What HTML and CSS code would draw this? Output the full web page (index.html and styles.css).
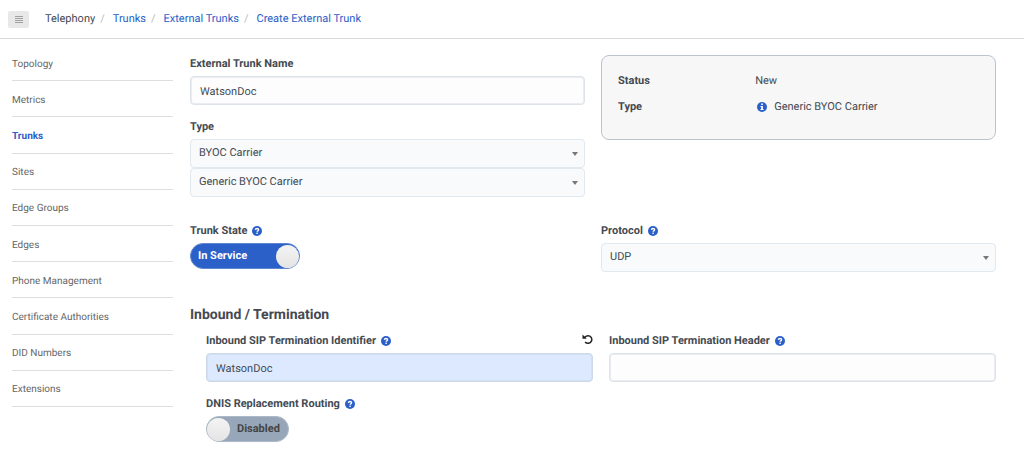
FILE: index.html
```html
<!DOCTYPE html>
<html lang="en">
<head>
<meta charset="utf-8">
<meta name="viewport" content="width=device-width, initial-scale=1">
<title>Create External Trunk</title>
<link rel="stylesheet" href="styles.css">
</head>
<body>
<svg class="sprite" width="0" height="0" aria-hidden="true">
  <symbol id="help" viewBox="0 0 10 10">
    <circle cx="5" cy="5" r="5" fill="#2a60c8"/>
    <path d="M3.4 3.9C3.5 2.9 4.1 2.5 5 2.5s1.6.5 1.6 1.3c0 1-1.5 1-1.5 2" fill="none" stroke="#fff" stroke-width="1.4"/>
    <rect x="4.4" y="6.6" width="1.4" height="1.4" fill="#fff"/>
  </symbol>
  <symbol id="info" viewBox="0 0 10 10">
    <circle cx="5" cy="5" r="5" fill="#2a60c8"/>
    <path d="M4.2 1.6h1.7v1.5H4.2zM3.5 3.9h2.4v3h.7v1.2H3.5V6.9h.7V5.1h-.7z" fill="#fff"/>
  </symbol>
</svg>
<header class="topbar">
  <button class="menu" type="button" aria-label="Toggle menu">
    <svg width="9" height="7" viewBox="0 0 9 7"><path d="M1 .5h8M1 2.5h8M1 4.5h8M1 6.5h8" stroke="#a0a0a0" stroke-width="1"/></svg>
  </button>
  <nav aria-label="Breadcrumb">
    <ol class="crumbs">
      <li>Telephony</li>
      <li><a href="#">Trunks</a></li>
      <li><a href="#">External Trunks</a></li>
      <li><a href="#">Create External Trunk</a></li>
    </ol>
  </nav>
</header>
<div class="page">
  <nav class="sidebar" aria-label="Telephony">
    <a href="#">Topology</a>
    <a href="#">Metrics</a>
    <a href="#" class="active" aria-current="page">Trunks</a>
    <a href="#">Sites</a>
    <a href="#">Edge Groups</a>
    <a href="#">Edges</a>
    <a href="#">Phone Management</a>
    <a href="#">Certificate Authorities</a>
    <a href="#">DID Numbers</a>
    <a href="#">Extensions</a>
  </nav>
  <main>
    <form class="form">
      <div class="columns">
        <div class="stack">
          <div class="field">
            <div class="caption"><label for="name">External Trunk Name</label></div>
            <input class="text" id="name" type="text" value="WatsonDoc">
          </div>
          <div class="field">
            <div class="caption"><label for="type">Type</label></div>
            <div class="selects">
              <div class="picker"><select id="type"><option>BYOC Carrier</option></select></div>
              <div class="picker"><select aria-label="Carrier"><option>Generic BYOC Carrier</option></select></div>
            </div>
          </div>
        </div>
        <dl class="summary">
          <dt>Status</dt><dd>New</dd>
          <dt>Type</dt><dd class="with-icon"><svg class="icon"><use href="#info"/></svg>Generic BYOC Carrier</dd>
        </dl>
      </div>
      <div class="columns state">
        <div class="field">
          <div class="caption"><label for="state">Trunk State</label><svg class="icon"><use href="#help"/></svg></div>
          <label class="toggle on">In Service<input id="state" type="checkbox" checked></label>
        </div>
        <div class="field">
          <div class="caption"><label for="protocol">Protocol</label><svg class="icon"><use href="#help"/></svg></div>
          <div class="picker"><select id="protocol"><option>UDP</option></select></div>
        </div>
      </div>
      <section>
        <h2>Inbound / Termination</h2>
        <div class="columns nested">
          <div class="field">
            <div class="caption">
              <label for="sip-id">Inbound SIP Termination Identifier</label><svg class="icon"><use href="#help"/></svg>
              <button class="reset" type="button" aria-label="Reset">
                <svg width="11" height="11" viewBox="0 0 11 11"><path d="M1.5 3.2H3C4 2 4.900 1.700 6 1.700a3.800 3.800 0 1 1-2.900 6.300" fill="none" stroke="#222" stroke-width="1.500"/><path d="M.5 .5v4.200h4.200z" fill="#222"/></svg>
              </button>
            </div>
            <input class="text filled" id="sip-id" type="text" value="WatsonDoc">
          </div>
          <div class="field">
            <div class="caption"><label for="sip-header">Inbound SIP Termination Header</label><svg class="icon"><use href="#help"/></svg></div>
            <input class="text" id="sip-header" type="text">
          </div>
          <div class="field">
            <div class="caption"><label for="dnis">DNIS Replacement Routing</label><svg class="icon"><use href="#help"/></svg></div>
            <label class="toggle off"><input id="dnis" type="checkbox">Disabled</label>
          </div>
        </div>
      </section>
    </form>
  </main>
</div>
</body>
</html>
```
FILE: styles.css
```css
* { box-sizing: border-box; }
body {
  margin: 0;
  background: #fff;
  color: #444a52;
  font: 11px/16px Roboto, "Liberation Sans", sans-serif;
  text-rendering: geometricPrecision;
}
a { color: #2a60c8; text-decoration: none; }
.sprite { display: block; }
.topbar {
  display: flex;
  align-items: center;
  gap: 16px;
  height: 39px;
  padding: 0 8px;
  border-bottom: 1px solid #d8dbdd;
}
.menu {
  display: grid;
  place-items: center;
  width: 21px;
  height: 17px;
  padding: 0;
  border: 0;
  border-radius: 2px;
  background: #e8e8e8;
}
.crumbs {
  display: flex;
  margin: 0;
  padding: 0;
  list-style: none;
}
.crumbs li + li::before {
  content: "/";
  margin: 0 8px 0 5px;
  color: #b8bcc0;
}
.page {
  display: grid;
  grid-template-columns: 161px 1fr;
  gap: 17px;
  padding: 0 28px 0 12px;
}
.sidebar {
  display: grid;
  grid-auto-rows: 1fr;
  padding: 6px 0 46px;
  font-size: 10px;
}
.sidebar a {
  display: flex;
  align-items: center;
  padding-top: 4px;
  border-bottom: 1px solid #dcdedf;
  color: #666;
}
.sidebar .active { color: #2a60c8; font-weight: 700; }
.form { padding: 17px 0 11px; }
.columns {
  display: grid;
  grid-template-columns: 1fr 1fr;
  gap: 14px 16px;
  align-items: start;
}
.stack { display: grid; gap: 14px; }
.field { display: grid; gap: 4px; justify-items: start; }
.caption {
  display: flex;
  align-items: center;
  gap: 5px;
  width: 100%;
  height: 16px;
  font-weight: 700;
}
.icon { width: 10px; height: 10px; }
.text, select {
  width: 100%;
  height: 29px;
  border: 1px solid #dde3e9;
  border-radius: 4px;
  color: inherit;
  font: inherit;
  text-rendering: inherit;
}
.text {
  padding: 1px 9px 0;
  background: #fdfdfd;
  box-shadow: inset 0 0 0 1px #e9edf1;
}
.filled { background: #dde9fe; border-color: #cdd9e8; box-shadow: inset 0 0 0 1px #d3e0f4; }
.selects, .picker { width: 100%; }
.picker { position: relative; }
.picker::after {
  content: "";
  position: absolute;
  top: 13px;
  right: 7px;
  border: 4px solid transparent;
  border-width: 4px 3px 0;
  border-top-color: #777;
  pointer-events: none;
}
select {
  display: block;
  appearance: none;
  padding: 0 20px 1px 8px;
  background: #f8fafc;
  border-color: #e1e8ee;
}
.summary {
  display: grid;
  grid-template-columns: 38% 1fr;
  gap: 10px 0;
  margin: -1px 0 0;
  padding: 17px 16px 24px;
  border: 1px solid #b9c4cf;
  border-radius: 8px;
  background: #f7f7f7;
}
dt { font-weight: 700; }
dd { margin: 0; }
.with-icon { display: flex; align-items: center; gap: 7px; padding-left: 2px; }
.state { margin-top: 26px; }
.toggle {
  display: flex;
  align-items: center;
  justify-content: space-between;
  height: 26px;
  border: 1px solid;
  border-radius: 13px;
  font-weight: 700;
}
.toggle input {
  appearance: none;
  width: 23px;
  height: 23px;
  margin: 0;
  border-radius: 50%;
  background: linear-gradient(#f4f4f4, #e4e4e4);
}
.on { width: 110px; padding-left: 7px; background: #2a60c8; border-color: #5f87d0; color: #fff; }
.off { gap: 7px; padding-right: 8px; background: #97a6b8; border-color: #adb9c8; color: #444; }
h2 { margin: 33px 0 8px; font-size: 14px; line-height: 20px; }
.nested { padding-left: 16px; }
.reset {
  display: flex;
  margin-left: auto;
  padding: 0 0 3px;
  border: 0;
  background: none;
}
```
